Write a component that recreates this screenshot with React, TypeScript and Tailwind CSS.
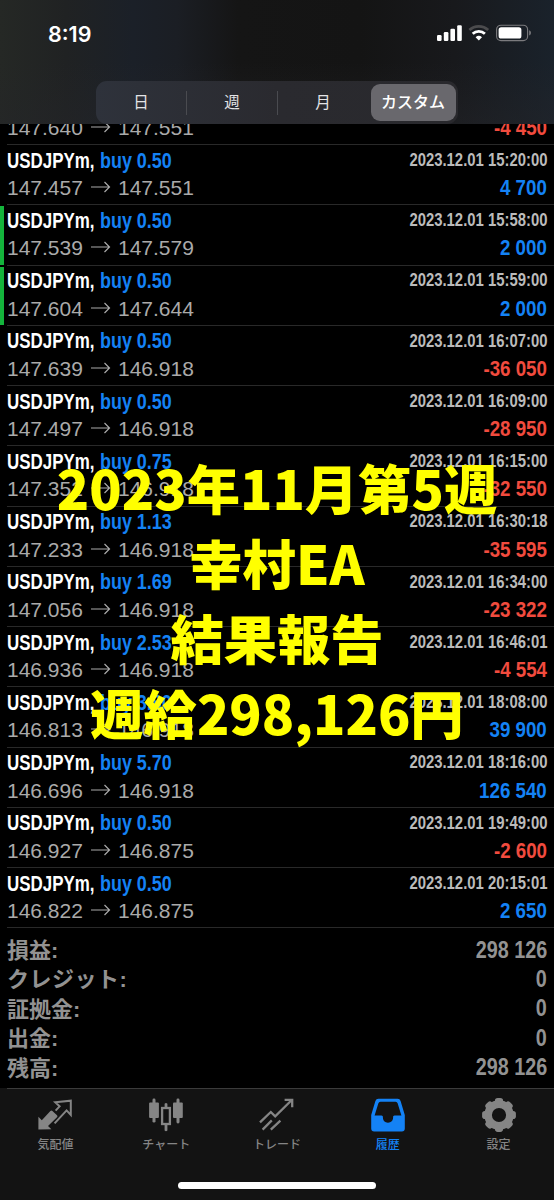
import { clsx } from "clsx";

const ranges = ["日", "週", "月", "カスタム"];

const deals = [
	{ volume: "0.50", open: "147.457", close: "147.551", time: "2023.12.01 15:20:00", profit: "4 700" },
	{ volume: "0.50", open: "147.539", close: "147.579", time: "2023.12.01 15:58:00", profit: "2 000", marked: true },
	{ volume: "0.50", open: "147.604", close: "147.644", time: "2023.12.01 15:59:00", profit: "2 000", marked: true },
	{ volume: "0.50", open: "147.639", close: "146.918", time: "2023.12.01 16:07:00", profit: "-36 050" },
	{ volume: "0.50", open: "147.497", close: "146.918", time: "2023.12.01 16:09:00", profit: "-28 950" },
	{ volume: "0.75", open: "147.352", close: "146.918", time: "2023.12.01 16:15:00", profit: "-32 550" },
	{ volume: "1.13", open: "147.233", close: "146.918", time: "2023.12.01 16:30:18", profit: "-35 595" },
	{ volume: "1.69", open: "147.056", close: "146.918", time: "2023.12.01 16:34:00", profit: "-23 322" },
	{ volume: "2.53", open: "146.936", close: "146.918", time: "2023.12.01 16:46:01", profit: "-4 554" },
	{ volume: "3.80", open: "146.813", close: "146.918", time: "2023.12.01 18:08:00", profit: "39 900" },
	{ volume: "5.70", open: "146.696", close: "146.918", time: "2023.12.01 18:16:00", profit: "126 540" },
	{ volume: "0.50", open: "146.927", close: "146.875", time: "2023.12.01 19:49:00", profit: "-2 600" },
	{ volume: "0.50", open: "146.822", close: "146.875", time: "2023.12.01 20:15:01", profit: "2 650" },
];

const totals = [
	{ label: "損益:", value: "298 126" },
	{ label: "クレジット:", value: "0", wide: true },
	{ label: "証拠金:", value: "0" },
	{ label: "出金:", value: "0" },
	{ label: "残高:", value: "298 126" },
];

const captions = ["2023年11月第5週", "幸村EA", "結果報告", "週給298,126円"];

function StatusIcons() {
	return (
		<svg width="96" height="18" viewBox="0 0 96 18" fill="#fff">
			<rect x="0" y="11" width="4.6" height="6" rx="1.2" />
			<rect x="6.8" y="8" width="4.6" height="9" rx="1.2" />
			<rect x="13.4" y="4.7" width="4.6" height="12.3" rx="1.2" />
			<rect x="20.2" y="1.2" width="4.6" height="15.8" rx="1.2" />
			<g fill="none" strokeWidth="2.7">
				<path d="M32.4 6.1a13.6 13.6 0 0 1 18.8 0" stroke="#4b4b4d" />
				<path d="M35.7 9.8a8.8 8.8 0 0 1 12.2 0" stroke="#fff" />
			</g>
			<path d="M38.6 13.2a4.7 4.7 0 0 1 6.4 0l-3.2 3.4z" />
			<rect x="59.6" y="1.2" width="31" height="15.4" rx="4.4" fill="none" stroke="#7b7b7e" strokeWidth="1.1" />
			<rect x="61.6" y="3.2" width="22.8" height="11.4" rx="2.6" />
			<path d="M92.2 6.3c2.3.8 2.3 4.4 0 5.2z" fill="#7b7b7e" />
		</svg>
	);
}

function QuotesIcon() {
	return (
		<svg width="36" height="36" viewBox="0 0 36 36" fill="currentColor">
			<path d="M1.4 32.6V19.8l3.4 3.4 8.6-9.2q1-1 2 0l4.6 4.2q1 1 0 2l-9 8.9 3.4 3.2z" />
			<path
				d="M18.6 13.6l4-4.2-4.4-4.2 15.6-1.5v14.2l-4.2-4.5-12 13"
				fill="none"
				stroke="currentColor"
				strokeWidth="2"
			/>
		</svg>
	);
}

function ChartIcon() {
	return (
		<svg width="36" height="36" viewBox="0 0 36 36" fill="currentColor">
			<rect x="1.1" y="5.4" width="9.8" height="15.6" rx="1" />
			<rect x="4.5" y="1.6" width="3" height="24" rx="1.4" />
			<rect x="25" y="5.4" width="9.8" height="15.6" rx="1" />
			<rect x="28.5" y="1.6" width="3" height="24.8" rx="1.4" />
			<rect x="14.1" y="11" width="7.8" height="16" fill="none" stroke="currentColor" strokeWidth="2.3" />
			<path d="M16.6 6.8q1.4-1.6 2.8 0V11h-2.8zM16.6 27.5h2.8v6q-1.4 1.4-2.8 0z" />
		</svg>
	);
}

function TradeIcon() {
	return (
		<svg width="36" height="36" viewBox="0 0 36 36" fill="none" stroke="currentColor" strokeWidth="2.3">
			<path d="M1 25.4L11.8 15l4.4 4.3L33 2.8M25.6 2.8h7.6v7.4" />
			<path d="M3.6 32.6l9.2-9.2M11.8 32.6l9.6-9" />
		</svg>
	);
}

function HistoryIcon() {
	return (
		<svg width="36" height="36" viewBox="0 0 36 36" fill="currentColor" fillRule="evenodd">
			<path d="M8.4 1.8h19.2a3.2 3.2 0 0 1 3 2.2L34.8 18v13.4a3 3 0 0 1-3 3H4.2a3 3 0 0 1-3-3V18L5.4 4A3.2 3.2 0 0 1 8.4 1.8zM10.4 4.8a2.2 2.2 0 0 0-2 1.5L4.6 18.5h6.8c1.2 0 1.5.7 1.5 1.8 0 3.5 2 5.4 5.1 5.4s5.1-1.9 5.1-5.4c0-1.1.3-1.8 1.5-1.8h6.8L27.6 6.3a2.2 2.2 0 0 0-2-1.5z" />
		</svg>
	);
}

function SettingsIcon() {
	return (
		<svg width="36" height="36" viewBox="0 0 36 36" fill="currentColor">
			<circle cx="18" cy="18" r="10.9" fill="none" stroke="currentColor" strokeWidth="7.6" />
			{[0, 45, 90, 135, 180, 225, 270, 315].map((angle) => (
				<rect key={angle} x="13.9" y="1.1" width="8.2" height="8" rx="2.8" transform={`rotate(${angle} 18 18)`} />
			))}
		</svg>
	);
}

const tabs = [
	{ label: "気配値", icon: <QuotesIcon /> },
	{ label: "チャート", icon: <ChartIcon /> },
	{ label: "トレード", icon: <TradeIcon /> },
	{ label: "履歴", icon: <HistoryIcon />, active: true },
	{ label: "設定", icon: <SettingsIcon /> },
];

function Arrow() {
	return (
		<svg className="mr-[7px] ml-2 mb-0.5 h-3 w-5 shrink-0" viewBox="0 0 20 12" fill="none" stroke="currentColor" strokeWidth="1.2">
			<path d="M0 6h18.5M13.5 1l5 5-5 5" />
		</svg>
	);
}

function Prices({ open, close }: { open: string; close: string }) {
	return (
		<div className="flex items-center text-[21px] leading-6 text-[#aaa]">
			<span className="w-[76px]">{open}</span>
			<Arrow />
			<span>{close}</span>
		</div>
	);
}

function Profit({ value }: { value: string }) {
	return (
		<div
			className={clsx(
				"origin-right scale-x-[0.87] text-[21.5px] leading-6 font-bold",
				value.startsWith("-") ? "text-[#f14b3e]" : "text-[#1482f5]"
			)}
		>
			{value}
		</div>
	);
}

export default function App() {
	return (
		<div className="relative flex h-[1200px] w-[554px] flex-col overflow-hidden bg-black font-['Liberation_Sans','Noto_Sans_CJK_JP',sans-serif]">
			<header className="h-[124px] shrink-0 bg-[linear-gradient(180deg,transparent_50%,#24252970_100%),linear-gradient(90deg,#252825_0%,#202223_12%,#1b2028_24%,#1b1e24_32%,#151515_43%,#141414_65%,#18191c_82%,#1a222b_100%)]">
				<div className="flex h-[81px] items-start justify-between pt-6 pr-[21px] pl-12">
					<span className="font-['Inter',sans-serif] text-[21.5px] leading-5 font-semibold text-white">8:19</span>
					<StatusIcons />
				</div>
				<div className="ml-24 flex h-[43px] w-[362px] items-center rounded-[11px] bg-linear-to-r from-[#2e323b] via-[#2a2a2f] to-[#29292d]">
					{ranges.map((range, i) => (
						<div
							key={range}
							className={clsx(
								"flex flex-1 items-center justify-center text-[15.5px] text-[#e4e4e6]",
								i < 2 && "h-6 border-r border-[#4a4b50]"
							)}
						>
							{i === 3 ? (
								<span className="flex h-[37px] w-[85px] items-center justify-center rounded-[9px] bg-[#69686d] text-base font-medium text-white">
									{range}
								</span>
							) : (
								range
							)}
						</div>
					))}
				</div>
			</header>

			<main className="flex-1">
				<div className="flex h-5 items-end justify-between overflow-hidden pr-[7px] pb-1 pl-[7px]">
					<Prices open="147.640" close="147.551" />
					<Profit value="-4 450" />
				</div>
				{deals.map((deal) => (
					<section key={deal.time} className="relative h-[60.26px] pr-[7px] pl-[7px]">
						<div className="absolute top-0 right-0 left-[7px] h-px bg-[#292929]" />
						{deal.marked && <div className="absolute top-0.5 bottom-0 left-0 w-1 bg-[#14b43c]" />}
						<div className="flex h-8 items-center justify-between font-bold">
							<div className="flex text-[22px]">
								<span className="w-[92.5px] origin-left scale-x-[0.77] text-white">USDJPYm,</span>
								<span className="origin-left scale-x-[0.815] whitespace-nowrap text-[#1482f5]">buy {deal.volume}</span>
							</div>
							<div className="origin-right scale-x-[0.85] text-[17.5px] whitespace-nowrap text-[#bbb]">{deal.time}</div>
						</div>
						<div className="flex justify-between">
							<Prices open={deal.open} close={deal.close} />
							<Profit value={deal.profit} />
						</div>
					</section>
				))}
				<div className="ml-[7px] border-t border-[#292929] pt-[7px] pr-[7px]">
					{totals.map((total) => (
						<div key={total.label} className="flex h-[29.4px] items-center justify-between font-bold text-[#929292]">
							<span className={clsx("pt-0.5 text-[22px] leading-none", total.wide && "tracking-[0.5px]")}>{total.label}</span>
							<span className="origin-right scale-x-[0.86] text-[23px]">{total.value}</span>
						</div>
					))}
				</div>
			</main>

			<nav className="flex h-28 shrink-0 flex-col bg-[#131313]">
				<div className="ml-[7px] h-px bg-[#3b3b3b]" />
				<div className="flex">
					{tabs.map((tab) => (
						<div
							key={tab.label}
							className={clsx("flex flex-1 flex-col items-center pt-2", tab.active ? "text-[#1482f5]" : "text-[#858585]")}
						>
							{tab.icon}
							<span className="mt-1 text-xs leading-4 font-medium">{tab.label}</span>
						</div>
					))}
				</div>
				<div className="mx-auto mt-auto mb-[11px] h-[7px] w-[198px] rounded-full bg-white" />
			</nav>

			<div className="absolute inset-x-0 top-[449px] flex flex-col items-center font-['Noto_Sans_CJK_JP',sans-serif] text-[53.3px] leading-[75px] font-black whitespace-nowrap text-[#ff0]">
				{captions.map((line) => (
					<p key={line}>{line}</p>
				))}
			</div>
		</div>
	);
}
